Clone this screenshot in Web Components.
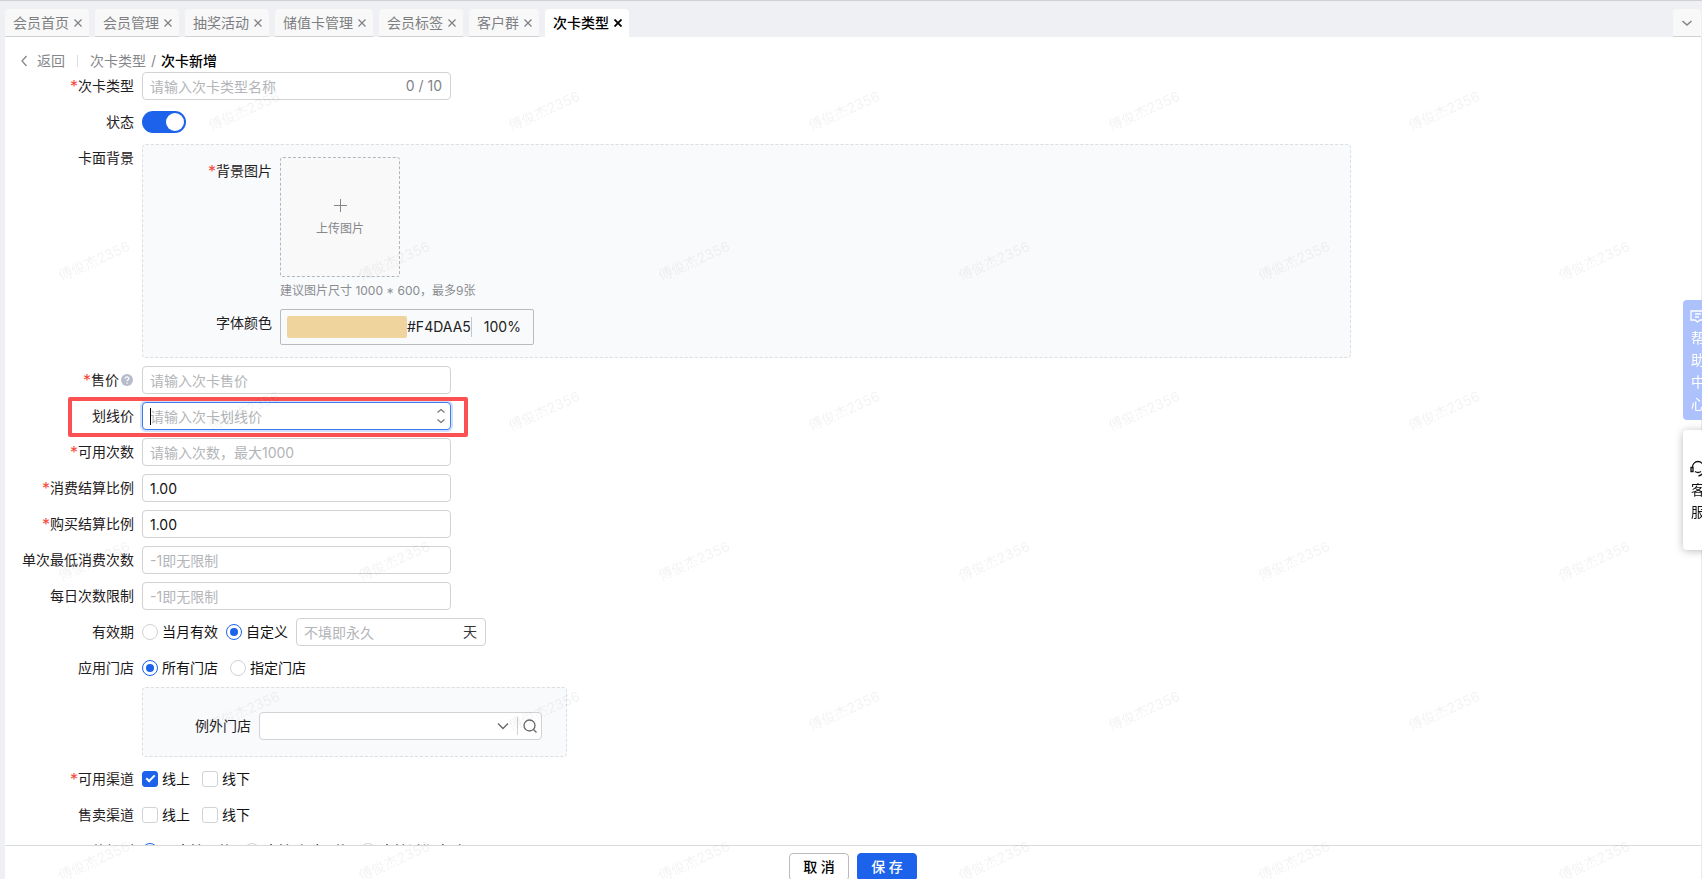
<!DOCTYPE html>
<html lang="zh-CN">
<head>
<meta charset="utf-8">
<meta name="viewport" content="width=device-width, initial-scale=1">
<title>次卡新增</title>
<style>
  html, body { margin: 0; height: 100%; }
  body {
    font: 14px/20px Inter, "Noto Sans CJK SC", sans-serif;
    color: #1f2022;
    background: #eff0f3;
    overflow: hidden;
  }
</style>
</head>
<body>
<card-page></card-page>

<script>
const BASE = `
  *, *::before, *::after { box-sizing: border-box; }
  button, input, select { font: inherit; color: inherit; margin: 0; }
  button { padding: 0; border: 0; background: none; cursor: pointer; }
  svg { display: block; fill: none; stroke: currentColor; }
`;

class Base extends HTMLElement {
  constructor() {
    super();
    this.attachShadow({ mode: 'open' });
  }
  connectedCallback() {
    this.shadowRoot.innerHTML = `<style>${BASE}${this.css()}</style>${this.html()}`;
  }
  css() { return ''; }
  html() { return '<slot></slot>'; }
  attr(name) { return this.getAttribute(name) || ''; }
}

/* A labelled form row: label column on the left, control on the right. */
class Field extends Base {
  css() {
    return `
      :host { display: block; }
      .row { position: relative; display: flex; width: fit-content; gap: 8px; align-items: flex-start; }
      .label {
        flex: none; width: var(--label-width, 129px);
        display: flex; justify-content: flex-end; align-items: center;
        line-height: 28px; min-height: 28px; white-space: nowrap;
      }
      .star { color: #f5483b; font-size: 16px; }
      .control { display: flex; align-items: center; min-height: 28px; }
      ${this.controlCss()}
    `;
  }
  controlCss() { return ''; }
  controlHtml() { return '<slot></slot>'; }
  labelInner() {
    const star = this.hasAttribute('required') ? '<span class="star">*</span>' : '';
    const help = this.hasAttribute('help') ? `
      <svg class="help" width="15" height="14" viewBox="0 0 15 14" aria-hidden="true">
        <circle cx="8" cy="7" r="6" fill="#b6bccb" stroke="none"/>
        <path d="M6.2 5.6a1.8 1.7 0 1 1 2.5 1.5c-.5.3-.7.5-.7 1" stroke="#fff" stroke-width="1.3"/>
        <circle cx="8" cy="10" r=".8" fill="#fff" stroke="none"/>
      </svg>` : '';
    return star + `<span>${this.attr('label')}</span>` + help;
  }
  labelHtml() { return `<label class="label" for="c">${this.labelInner()}</label>`; }
  html() {
    return `<div class="row">${this.labelHtml()}<div class="control">${this.controlHtml()}</div></div>`;
  }
}

const BOX = `
  .box {
    position: relative; display: flex; align-items: center; height: 28px;
    border: 1px solid #d0d2d6; border-radius: 4px; background: #fff; padding: 0 8px 0 7px;
  }
  .box input { flex: 1; min-width: 0; height: 26px; padding: 0; border: 0; outline: 0; background: none; color: #111; }
  .box input::placeholder { color: #b3b5b9; opacity: 1; }
`;

customElements.define('text-field', class extends Field {
  controlCss() {
    return BOX + `
      .box { width: 309px; }
      .suffix { color: #808388; }
      :host([active]) .box { border-color: #3b7cf0; box-shadow: 0 0 0 2px #d3e0fc; padding-right: 4px; }
      .caret { position: absolute; left: 7px; top: 5px; width: 1px; height: 17px; background: #000; }
      .steps { color: #777; }
      :host([active]) .row::after {
        content: ""; position: absolute; inset: -5px -17px -7px 63px;
        border: 4px solid #fb5153; border-radius: 2px; pointer-events: none;
      }
    `;
  }
  controlHtml() {
    const active = this.hasAttribute('active');
    return `<div class="box">
      <input id="c" type="text" value="${this.attr('value')}" placeholder="${this.attr('placeholder')}">
      ${this.hasAttribute('suffix') ? `<span class="suffix">${this.attr('suffix')}</span>` : ''}
      ${active ? `<span class="caret"></span>
        <svg class="steps" width="10" height="16" viewBox="0 0 10 16" stroke-width="1.2" aria-hidden="true">
          <path d="M1.5 4.5 5 1.5l3.5 3M1.5 11.5l3.5 3 3.5-3"/></svg>` : ''}
    </div>`;
  }
});

customElements.define('unit-input', class extends Base {
  css() { return BOX + `:host { display: block; } .box { width: 190px; } span { color: #333; }`; }
  html() {
    return `<div class="box"><input type="text" aria-label="${this.attr('name')}"
      placeholder="${this.attr('placeholder')}"><span>${this.attr('unit')}</span></div>`;
  }
});

customElements.define('switch-field', class extends Field {
  controlCss() {
    return `
      input {
        appearance: none; width: 44px; height: 22px; border-radius: 11px; background: #bbb;
        display: flex; align-items: center; padding: 2px;
      }
      input::before { content: ""; width: 18px; height: 18px; border-radius: 50%; background: #fff; }
      input:checked { background: #1c62ea; justify-content: flex-end; }
    `;
  }
  controlHtml() { return `<input id="c" type="checkbox" role="switch" checked>`; }
});

/* Radio or checkbox set; options are comma separated, the picked one starts with "+". */
customElements.define('choice-field', class extends Field {
  controlCss() {
    return `
      .control { gap: var(--choice-gap, 12px); }
      .opt { display: flex; align-items: center; gap: 4px; color: #111; white-space: nowrap; }
      input {
        appearance: none; flex: none; width: 16px; height: 16px; background: #fff;
        border: 1px solid #d0d2d6; border-radius: 3px; display: grid; place-items: center;
      }
      input[type=radio] { border-radius: 50%; }
      input[type=radio]:checked { border-color: #1c62ea; }
      input[type=radio]:checked::before { content: ""; width: 8px; height: 8px; border-radius: 50%; background: #1c62ea; }
      input[type=checkbox]:checked { border-color: #1c62ea; background: #1c62ea; }
      input[type=checkbox]:checked::before {
        content: ""; width: 9px; height: 5px; margin-bottom: 3px;
        border: solid #fff; border-width: 0 0 2px 2px; rotate: -45deg;
      }
    `;
  }
  labelHtml() { return `<div class="label" id="l">${this.labelInner()}</div>`; }
  html() {
    const type = this.attr('type');
    const opts = this.attr('options').split(',').map(o => {
      const on = o[0] === '+';
      return `<label class="opt"><input type="${type}" name="o"${on ? ' checked' : ''}><span>${on ? o.slice(1) : o}</span></label>`;
    }).join('');
    return `<div class="row">${this.labelHtml()}
      <div class="control" role="group" aria-labelledby="l">${opts}<slot></slot></div></div>`;
  }
});

/* A row whose control is a dashed panel holding further rows. */
customElements.define('panel-field', class extends Field {
  controlCss() {
    return `
      .row { width: auto; }
      .control {
        flex: 0 1 var(--panel-width); display: flex; flex-direction: column; align-items: stretch; gap: 8px;
        padding: var(--panel-padding, 12px 0); background: #f8fafc; border: 1px dashed #dcdfe2; border-radius: 4px;
      }
    `;
  }
  labelHtml() { return `<div class="label">${this.labelInner()}</div>`; }
});

customElements.define('upload-field', class extends Field {
  controlCss() {
    return `
      .control { flex-direction: column; align-items: flex-start; }
      button {
        width: 120px; height: 120px; border: 1px dashed #b4b6b9; border-radius: 3px; background: #f9f9f9;
        display: flex; flex-direction: column; align-items: center; justify-content: center; gap: 9px;
        font-size: 12px; line-height: 16px; color: #85878a;
      }
      .hint { padding-top: 4px; font-size: 12px; line-height: 20px; color: #8a8c90; white-space: nowrap; }
    `;
  }
  controlHtml() {
    return `<button id="c" type="button">
        <svg width="14" height="14" viewBox="0 0 14 14" aria-hidden="true"><path d="M7.5 1v13M1 7.5h13"/></svg>
        <span>上传图片</span>
      </button>
      <div class="hint">${this.attr('hint')}</div>`;
  }
});

customElements.define('color-field', class extends Field {
  controlCss() {
    return `
      button {
        width: 254px; height: 36px; padding: 0 6px; border: 1px solid #b9bbbf; border-radius: 2px;
        display: flex; align-items: center; background: #f9fafc; color: #222;
      }
      .swatch { width: 120px; height: 22px; border-radius: 2px; background: #f0d49d; }
      .alpha { padding-left: 12px; border-left: 1px solid #c5c7cb; }
    `;
  }
  controlHtml() {
    return `<button id="c" type="button"><span class="swatch"></span><span>#F4DAA5</span><span class="alpha">100%</span></button>`;
  }
});

customElements.define('store-select', class extends Field {
  controlCss() {
    return `
      .box { position: relative; width: 283px; height: 28px; display: flex; align-items: center;
        border: 1px solid #d0d2d6; border-radius: 4px; background: #fff; color: #666; }
      select { appearance: none; flex: 1; height: 26px; border: 0; outline: 0; background: none; padding: 0 7px; }
      .chev { flex: none; margin-right: 8px; }
      button { width: 24px; height: 18px; border-left: 1px solid #d0d2d6; padding-left: 4px; }
    `;
  }
  controlHtml() {
    return `<div class="box"><select id="c"><option></option></select>
      <svg class="chev" width="12" height="12" viewBox="0 0 12 12" stroke-width="1.3" aria-hidden="true"><path d="m1 3.500 5 5 5-5"/></svg>
      <button type="button" aria-label="搜索"><svg width="16" height="16" viewBox="0 0 16 16" stroke-width="1.300"><circle cx="7.500" cy="7.500" r="5.500"/><path d="m11.500 11.500 3 3"/></svg></button>
    </div>`;
  }
});

customElements.define('page-tab', class extends Base {
  css() {
    return `
      :host {
        display: flex; align-items: center; gap: 5px; height: 28px; padding: 0 7px 0 8px;
        border-bottom: 1px solid #cfd0d2; border-radius: 4px 4px 0 0; background: #f8f8f8; color: #7d7f82;
      }
      :host([current]) { background: #fff; color: #000; border-color: #fff; font-weight: 500; }
      a { color: inherit; text-decoration: none; line-height: 26px; white-space: nowrap; }
      svg { stroke-width: 1.2; }
      :host([current]) svg { stroke-width: 1.8; }
    `;
  }
  html() {
    return `<a href="#"><slot></slot></a>
      <button type="button" aria-label="关闭"><svg width="8" height="8" viewBox="0 0 8 8"><path d="m.5.5 7 7m0-7-7 7"/></svg></button>`;
  }
});

customElements.define('page-tabs', class extends Base {
  css() {
    return `
      :host { display: flex; justify-content: space-between; border-top: 1px solid #d0d1d4; padding: 8px 1px 0 5px; }
      nav { display: flex; gap: 6px; }
      .more { width: 28px; height: 28px; display: grid; place-items: center; color: #808285;
        border-bottom: 1px solid #cfd0d2; border-radius: 4px 4px 0 0; background: #f8f8f8; }
    `;
  }
  html() {
    return `<nav><slot></slot></nav>
      <button class="more" type="button" aria-label="更多"><svg width="12" height="12" viewBox="0 0 12 12" stroke-width="1.500"><path d="m1.500 4 4.500 4 4.500-4"/></svg></button>`;
  }
});

customElements.define('crumb-bar', class extends Base {
  css() {
    return `
      :host { display: flex; align-items: center; height: 35px; padding: 12px 0 0 15px; color: #85878a; }
      a { color: inherit; text-decoration: none; }
      .back { display: flex; align-items: center; gap: 8px; padding-right: 12px; }
      .path { display: flex; gap: 5px; padding-left: 12px; }
      i { width: 1px; height: 12px; background: #dcdde0; }
      b { font-weight: 500; color: #000; }
    `;
  }
  html() {
    return `<a class="back" href="#"><svg width="9" height="12" viewBox="0 0 9 12" stroke-width="1.300" aria-hidden="true"><path d="M6.500 1 2 6l4.500 5"/></svg>返回</a><i></i>
      <div class="path"><a href="#">次卡类型</a><span>/</span><b>次卡新增</b></div>`;
  }
});

customElements.define('action-button', class extends Base {
  css() {
    return `
      :host { display: block; }
      button { display: block; width: 60px; height: 28px; border: 1px solid #b9bbbf; border-radius: 4px;
        background: #fff; color: #000; font-weight: 500; white-space: pre; }
      :host([primary]) button { background: #1c62ea; border-color: #1c62ea; color: #fff; }
    `;
  }
  html() { return `<button type="button"><slot></slot></button>`; }
});

/* Docks that hang half off the right edge of the window. */
customElements.define('side-docks', class extends Base {
  css() {
    return `
      :host { position: fixed; right: -14px; top: 300px; display: flex; flex-direction: column; gap: 10px; }
      button {
        width: 33px; height: 120px; border-radius: 4px; line-height: 22px;
        display: flex; flex-direction: column; align-items: flex-start; justify-content: center; padding-left: 8px;
      }
      .help { background: #adc1fd; color: #fff; }
      .service { background: #fff; color: #111; box-shadow: 0 1px 8px #0004; }
      svg { height: 22px; margin-left: -1px; }
    `;
  }
  html() {
    return `
      <button class="help" type="button">
        <svg width="16" height="22" viewBox="0 0 16 22" stroke-width="1.300"><path d="M1 6h14v9h-5l-2.500 2L5 15H1zM5 9h6M5 12h4"/></svg>
        <span>帮</span><span>助</span><span>中</span><span>心</span>
      </button>
      <button class="service" type="button">
        <svg width="16" height="22" viewBox="0 0 16 22" stroke-width="1.300"><path d="M2.500 10a5.500 5.500 0 0 1 11 0M1 10.500v4h2v-4zM13 10.500v4h2v-4zM5 14.500q3 2 6 0M13.500 15q-1 3-5 4"/></svg>
        <span>客</span><span>服</span>
      </button>`;
  }
});

/* Staggered user watermark laid over the whole page. */
customElements.define('water-mark', class extends Base {
  css() {
    return `
      :host { position: fixed; inset: 36px 0 0 0; overflow: hidden; pointer-events: none; color: #0000000d; }
      div { display: flex; height: 150px; padding-left: 94px; }
      div:nth-of-type(even) { padding-left: 0; margin-left: -56px; }
      span { flex: none; width: 300px; height: 150px; display: grid; place-items: center; rotate: -24deg; }
    `;
  }
  html() {
    const cols = Math.ceil(innerWidth / 300), rows = Math.ceil(innerHeight / 150);
    return `<div>${`<span>${this.attr('text')}</span>`.repeat(cols)}</div>`.repeat(rows);
  }
});

customElements.define('card-page', class extends Base {
  css() {
    return `
      :host { display: flex; flex-direction: column; height: 100vh; }
      main { flex: 1; min-height: 0; display: flex; flex-direction: column; margin-left: 5px;
        background: #fff; border-right: 1px solid #e9eaec; }
      form { flex: 1; min-height: 0; overflow: hidden; display: flex; flex-direction: column; gap: 8px; }
      form > * { flex: none; }
      footer { flex: none; height: 34px; overflow: hidden; display: flex; justify-content: center; gap: 8px;
        padding-top: 7px; border-top: 1px solid #d9dadc; }
      .face { --panel-width: 1209px; }
      .face > * { --label-width: 129px; }
      .stores { --panel-width: 425px; --panel-padding: 24px 0 16px; margin-top: -3px; }
      .stores > * { --label-width: 108px; }
      .term { --choice-gap: 8px; }
    `;
  }
  html() {
    return `
      <page-tabs>
        <page-tab>会员首页</page-tab><page-tab>会员管理</page-tab><page-tab>抽奖活动</page-tab>
        <page-tab>储值卡管理</page-tab><page-tab>会员标签</page-tab><page-tab>客户群</page-tab>
        <page-tab current>次卡类型</page-tab>
      </page-tabs>
      <main>
        <crumb-bar></crumb-bar>
        <form>
          <text-field label="次卡类型" required placeholder="请输入次卡类型名称" suffix="0 / 10"></text-field>
          <switch-field label="状态"></switch-field>
          <panel-field class="face" label="卡面背景">
            <upload-field label="背景图片" required hint="建议图片尺寸 1000 * 600，最多9张"></upload-field>
            <color-field label="字体颜色"></color-field>
          </panel-field>
          <text-field label="售价" required help placeholder="请输入次卡售价"></text-field>
          <text-field label="划线价" active placeholder="请输入次卡划线价"></text-field>
          <text-field label="可用次数" required placeholder="请输入次数，最大1000"></text-field>
          <text-field label="消费结算比例" required value="1.00"></text-field>
          <text-field label="购买结算比例" required value="1.00"></text-field>
          <text-field label="单次最低消费次数" placeholder="-1即无限制"></text-field>
          <text-field label="每日次数限制" placeholder="-1即无限制"></text-field>
          <choice-field class="term" label="有效期" type="radio" options="当月有效,+自定义">
            <unit-input name="有效天数" placeholder="不填即永久" unit="天"></unit-input>
          </choice-field>
          <choice-field label="应用门店" type="radio" options="+所有门店,指定门店"></choice-field>
          <panel-field class="stores" label="">
            <store-select label="例外门店"></store-select>
          </panel-field>
          <choice-field label="可用渠道" required type="checkbox" options="+线上,线下"></choice-field>
          <choice-field label="售卖渠道" type="checkbox" options="线上,线下"></choice-field>
          <choice-field label="退款规则" type="radio" options="+不支持退款,支持随时退款,支持过期自动退"></choice-field>
        </form>
        <footer>
          <action-button>取 消</action-button>
          <action-button primary>保 存</action-button>
        </footer>
      </main>
      <side-docks></side-docks>
      <water-mark text="傅俊杰2356"></water-mark>`;
  }
});
</script>
</body>
</html>
